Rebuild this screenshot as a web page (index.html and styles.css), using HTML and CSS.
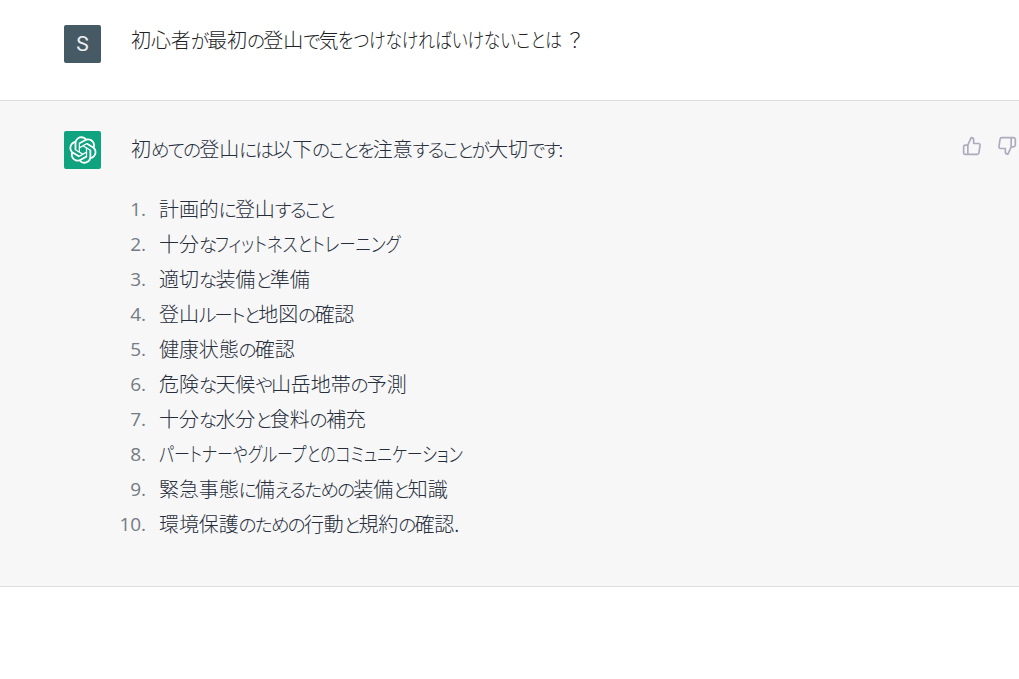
FILE: index.html
```
<!DOCTYPE html>
<html lang="ja">

<head>
    <meta charset="UTF-8">
    <meta name="viewport" content="width=device-width, initial-scale=1.0">
    <title>登山</title>
    <link rel="stylesheet" href="styles.css">
</head>

<body>
    <main class="chat">
        <section class="message user">
            <div class="avatar">S</div>
            <div class="content">
                <p class="question">初心者<span class="kana">が</span>最初<span class="kana">の</span>登山<span class="kana">で</span>気<span class="narrow">をつけなければいけないことは</span><span class="mark">？</span></p>
            </div>
        </section>

        <section class="message assistant">
            <div class="avatar">
                <svg viewBox="0 0 41 41" fill="currentColor">
                    <path d="M37.5324 16.8707C37.9808 15.5241 38.1363 14.0974 37.9886 12.6859C37.8409 11.2744 37.3934 9.91076 36.676 8.68622C35.6126 6.83404 33.9882 5.3676 32.0373 4.4985C30.0864 3.62941 27.9098 3.40259 25.8215 3.85078C24.8796 2.7893 23.7219 1.94125 22.4257 1.36341C21.1295 0.785575 19.7249 0.491269 18.3058 0.500197C16.1708 0.495044 14.0893 1.16803 12.3614 2.42214C10.6335 3.67624 9.34853 5.44666 8.6917 7.47815C7.30085 7.76286 5.98686 8.3414 4.8377 9.17505C3.68854 10.0087 2.73073 11.0782 2.02839 12.312C0.956464 14.1591 0.498905 16.2988 0.721698 18.4228C0.944492 20.5467 1.83612 22.5449 3.268 24.1293C2.81966 25.4759 2.66413 26.9026 2.81182 28.3141C2.95951 29.7256 3.40701 31.0892 4.12437 32.3138C5.18791 34.1659 6.8123 35.6322 8.76321 36.5013C10.7141 37.3704 12.8907 37.5973 14.9789 37.1492C15.9208 38.2107 17.0786 39.0587 18.3747 39.6366C19.6709 40.2144 21.0755 40.5087 22.4946 40.4998C24.6307 40.5054 26.7133 39.8321 28.4418 38.5772C30.1704 37.3223 31.4556 35.5506 32.1119 33.5179C33.5027 33.2332 34.8167 32.6547 35.9659 31.821C37.115 30.9874 38.0728 29.9178 38.7752 28.684C39.8458 26.8371 40.3023 24.6979 40.0789 22.5748C39.8556 20.4517 38.9639 18.4544 37.5324 16.8707ZM22.4978 37.8849C20.7443 37.8874 19.0459 37.2733 17.6994 36.1501C17.7601 36.117 17.8666 36.0586 17.936 36.0161L25.9004 31.4156C26.1003 31.3019 26.2663 31.137 26.3813 30.9378C26.4964 30.7386 26.5563 30.5124 26.5549 30.2825V19.0542L29.9213 20.998C29.9389 21.0068 29.9541 21.0198 29.9656 21.0359C29.977 21.052 29.9842 21.0707 29.9867 21.0902V30.3889C29.9842 32.375 29.1946 34.2791 27.7909 35.6841C26.3872 37.0892 24.4838 37.8806 22.4978 37.8849ZM6.39227 31.0064C5.51397 29.4888 5.19742 27.7107 5.49804 25.9832C5.55718 26.0187 5.66048 26.0818 5.73461 26.1244L13.699 30.7248C13.8975 30.8408 14.1233 30.902 14.3532 30.902C14.583 30.902 14.8088 30.8408 15.0073 30.7248L24.731 25.1103V28.9979C24.7321 29.0177 24.7283 29.0376 24.7199 29.0556C24.7115 29.0736 24.6988 29.0893 24.6829 29.1012L16.6317 33.7497C14.9096 34.7416 12.8643 35.0097 10.9447 34.4954C9.02506 33.9811 7.38785 32.7263 6.39227 31.0064ZM4.29707 13.6194C5.17156 12.0998 6.55279 10.9364 8.19885 10.3327C8.19885 10.4013 8.19491 10.5228 8.19491 10.6071V19.808C8.19351 20.0378 8.25334 20.2638 8.36823 20.4629C8.48312 20.6619 8.64893 20.8267 8.84863 20.9404L18.5723 26.5542L15.206 28.4979C15.1894 28.5089 15.1703 28.5155 15.1505 28.5173C15.1307 28.5191 15.1107 28.516 15.0924 28.5082L7.04046 23.8557C5.32135 22.8601 4.06716 21.2235 3.55289 19.3046C3.03862 17.3858 3.30624 15.3413 4.29707 13.6194ZM31.955 20.0556L22.2312 14.4411L25.5976 12.4981C25.6142 12.4872 25.6333 12.4805 25.6531 12.4787C25.6729 12.4769 25.6928 12.4801 25.7111 12.4879L33.7631 17.1364C34.9967 17.849 36.0017 18.8982 36.6606 20.1613C37.3194 21.4244 37.6047 22.849 37.4832 24.2684C37.3617 25.6878 36.8382 27.0432 35.9743 28.1759C35.1103 29.3086 33.9415 30.1717 32.6047 30.6641C32.6047 30.5947 32.6047 30.4733 32.6047 30.3889V21.188C32.6066 20.9586 32.5474 20.7328 32.4332 20.5338C32.319 20.3348 32.154 20.1698 31.955 20.0556ZM35.3055 15.0128C35.2464 14.9765 35.1431 14.9142 35.069 14.8717L27.1045 10.2712C26.906 10.1554 26.6803 10.0943 26.4504 10.0943C26.2206 10.0943 25.9948 10.1554 25.7963 10.2712L16.0726 15.8858V11.9982C16.0715 11.9783 16.0753 11.9585 16.0837 11.9405C16.0921 11.9225 16.1048 11.9068 16.1207 11.8949L24.1719 7.25025C25.4053 6.53903 26.8158 6.19376 28.2383 6.25482C29.6608 6.31589 31.0364 6.78077 32.2044 7.59508C33.3723 8.40939 34.2842 9.53945 34.8334 10.8531C35.3826 12.1667 35.5464 13.6095 35.3055 15.0128ZM14.2424 21.9419L10.8752 19.9981C10.8576 19.9893 10.8423 19.9763 10.8309 19.9602C10.8195 19.9441 10.8122 19.9254 10.8098 19.9058V10.6071C10.8107 9.18295 11.2173 7.78848 11.9819 6.58696C12.7466 5.38544 13.8377 4.42659 15.1275 3.82264C16.4173 3.21869 17.8524 2.99464 19.2649 3.1767C20.6775 3.35876 22.0089 3.93941 23.1034 4.85067C23.0427 4.88379 22.937 4.94215 22.8668 4.98473L14.9024 9.58517C14.7025 9.69878 14.5366 9.86356 14.4215 10.0626C14.3065 10.2616 14.2466 10.4877 14.2479 10.7175L14.2424 21.9419ZM16.071 17.9991L20.4018 15.4978L24.7325 17.9975V22.9985L20.4018 25.4983L16.071 22.9985V17.9991Z"/>
                </svg>
            </div>
            <div class="content">
                <p class="intro">初<span class="kana">めての</span>登山<span class="kana">には</span>以下<span class="kana">のことを</span>注意<span class="kana">することが</span>大切<span class="kana">です:</span></p>
                <ol class="tips">
                    <li><span>計画的<span class="kana">に</span>登山<span class="kana">すること</span></span></li>
                    <li><span>十分<span class="kana">な</span><span class="narrow">フィットネスとトレーニング</span></span></li>
                    <li><span>適切<span class="kana">な</span>装備<span class="kana">と</span>準備</span></li>
                    <li><span>登山<span class="kana">ルートと</span>地図<span class="kana">の</span>確認</span></li>
                    <li><span>健康状態<span class="kana">の</span>確認</span></li>
                    <li><span>危険<span class="kana">な</span>天候<span class="kana">や</span>山岳地帯<span class="kana">の</span>予測</span></li>
                    <li><span>十分<span class="kana">な</span>水分<span class="kana">と</span>食料<span class="kana">の</span>補充</span></li>
                    <li><span class="narrow katakana">パートナーやグループとのコミュニケーション</span></li>
                    <li><span>緊急事態<span class="kana">に</span>備<span class="kana">えるための</span>装備<span class="kana">と</span>知識</span></li>
                    <li><span>環境保護<span class="kana">のための</span>行動<span class="kana">と</span>規約<span class="kana">の</span>確認.</span></li>
                </ol>
            </div>
            <div class="feedback">
                <button aria-label="良い">
                    <svg viewBox="0 0 24 24">
                        <path d="M14 9V5a3 3 0 0 0-3-3l-4 9v11h11.28a2 2 0 0 0 2-1.7l1.38-9a2 2 0 0 0-2-2.3zM7 22H4a2 2 0 0 1-2-2v-7a2 2 0 0 1 2-2h3"/>
                    </svg>
                </button>
                <button aria-label="悪い">
                    <svg viewBox="0 0 24 24">
                        <path d="M10 15v4a3 3 0 0 0 3 3l4-9V2H5.72a2 2 0 0 0-2 1.7l-1.38 9a2 2 0 0 0 2 2.3zm7-13h2.67A2.31 2.31 0 0 1 22 4v7a2.31 2.31 0 0 1-2.33 2H17"/>
                    </svg>
                </button>
            </div>
        </section>
    </main>
</body>

</html>
```
FILE: styles.css
```
* {
    box-sizing: border-box;
}

body {
    margin: 0;
    background: #fff;
    color: #202123;
    font-family: "Noto Sans CJK JP", sans-serif;
    font-size: 20px;
    font-weight: 300;
    line-height: 35px;
    letter-spacing: -0.1px;
    font-feature-settings: "palt";
}

.message {
    display: flex;
    padding: 25px 0 0 64px;
    border-bottom: 1px solid #dedede;
}

.user {
    height: 101px;
}

.assistant {
    height: 486px;
    padding-top: 30px;
    background: #f7f7f7;
    color: #262d3b;
}

.avatar {
    display: flex;
    align-items: center;
    justify-content: center;
    flex: none;
    width: 37px;
    height: 38px;
    margin-right: 30px;
    border-radius: 2px;
    background: #455a64;
    color: #eceff1;
    font-family: Roboto, sans-serif;
    font-size: 21px;
    font-weight: 400;
}

.assistant .avatar {
    background: #10a37f;
    color: #fff;
}

.avatar svg {
    width: 28px;
    height: 28px;
}

.content {
    flex: 1;
    white-space: nowrap;
}

.content p {
    height: 35px;
    margin: 0;
}

.content .question {
    margin-top: -3px;
}

/* kana is set narrower than the kanji around it */
.kana {
    font-size: 18.7px;
    letter-spacing: -1.8px;
}

.narrow {
    display: inline-block;
    transform: scaleX(0.83);
    transform-origin: left;
}

.katakana {
    transform: scaleX(0.8);
}

.question .narrow {
    margin-right: -40px;
    transform: scaleX(0.84);
}

.mark {
    font-feature-settings: normal;
}

.tips {
    margin: 25px 0 0;
    padding: 0;
    list-style: none;
    counter-reset: tip;
}

.tips li {
    display: flex;
    height: 35px;
    counter-increment: tip;
}

.tips li::before {
    content: counter(tip) ".";
    width: 40px;
    margin: 1px 13px 0 -25px;
    color: #737b84;
    font-family: "Open Sans", sans-serif;
    font-size: 19px;
    font-weight: 400;
    text-align: right;
}

.feedback {
    display: flex;
    gap: 15px;
    padding: 5px 2px 0 0;
}

.feedback button {
    width: 20px;
    height: 20px;
    padding: 0;
    border: 0;
    background: none;
}

.feedback svg {
    display: block;
    width: 20px;
    height: 20px;
    fill: none;
    stroke: #acacbe;
    stroke-width: 2;
    stroke-linecap: round;
    stroke-linejoin: round;
}
```
